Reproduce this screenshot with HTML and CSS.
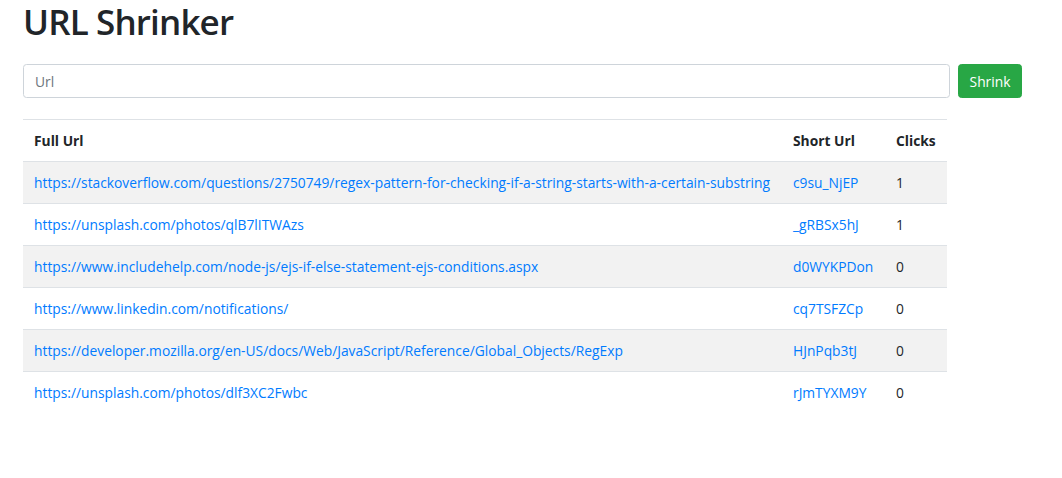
FILE: index.html
```html
<!DOCTYPE html>
<html lang="en">
<head>
<meta charset="utf-8">
<title>URL Shrinker</title>
<link rel="stylesheet" href="styles.css">
</head>
<body>
<div class="page">
  <h1 class="title">URL Shrinker</h1>
  <form class="shrink-form">
    <input class="url-input" type="url" placeholder="Url">
    <button class="btn-shrink" type="button">Shrink</button>
  </form>
  <table class="url-table">
    <thead>
      <tr><th class="col-full">Full Url</th><th class="col-short">Short Url</th><th class="col-clicks">Clicks</th></tr>
    </thead>
    <tbody>
      <tr><td><a href="#">https://stackoverflow.com/questions/2750749/regex-pattern-for-checking-if-a-string-starts-with-a-certain-substring</a></td><td><a href="#">c9su_NjEP</a></td><td>1</td></tr>
      <tr><td><a href="#">https://unsplash.com/photos/qlB7lITWAzs</a></td><td><a href="#">_gRBSx5hJ</a></td><td>1</td></tr>
      <tr><td><a href="#">https://www.includehelp.com/node-js/ejs-if-else-statement-ejs-conditions.aspx</a></td><td><a href="#">d0WYKPDon</a></td><td>0</td></tr>
      <tr><td><a href="#">https://www.linkedin.com/notifications/</a></td><td><a href="#">cq7TSFZCp</a></td><td>0</td></tr>
      <tr><td><a href="#">https://developer.mozilla.org/en-US/docs/Web/JavaScript/Reference/Global_Objects/RegExp</a></td><td><a href="#">HJnPqb3tJ</a></td><td>0</td></tr>
      <tr><td><a href="#">https://unsplash.com/photos/dlf3XC2Fwbc</a></td><td><a href="#">rJmTYXM9Y</a></td><td>0</td></tr>
    </tbody>
  </table>
</div>
</body>
</html>
```
FILE: styles.css
```css
* { box-sizing: border-box; }
html, body { margin: 0; padding: 0; background: #fff; }
body {
  font-family: "Open Sans", "Noto Sans", "Liberation Sans", sans-serif;
  font-size: 14px;
  color: #212529;
}
.page { padding: 0 23px; }
.title {
  margin: 0;
  height: 49px;
  font-size: 35px;
  font-weight: 600;
  letter-spacing: -0.85px;
  line-height: 44px;
  color: #212529;
}
.shrink-form {
  display: flex;
  gap: 8px;
  margin-top: 15px;
  width: 999px;
}
.url-input {
  flex: 1;
  height: 34px;
  border: 1px solid #ced4da;
  border-radius: 3.5px;
  padding: 0 11px;
  font: inherit;
  font-size: 13.8px;
  color: #495057;
}
.url-input::placeholder { color: #6c757d; }
.btn-shrink {
  width: 64px;
  height: 34px;
  border: 1px solid #28a745;
  border-radius: 3.5px;
  background: #28a745;
  color: #fff;
  font: inherit;
  font-size: 13.8px;
  padding: 0;
}
.url-table {
  margin-top: 21px;
  width: 924px;
  border-collapse: collapse;
  table-layout: fixed;
  font-size: 13.8px;
}
.col-full { width: 759px; }
.col-short { width: 103px; }
.col-clicks { width: 62px; }
.url-table th, .url-table td {
  text-align: left;
  padding: 0 11px;
  height: 42px;
  vertical-align: middle;
  white-space: nowrap;
  border-top: 1px solid #dee2e6;
}
.url-table th { font-weight: 700; border-bottom: 1px solid #dee2e6; }
.url-table tbody tr:first-child td { border-top: none; }
.url-table tbody tr:nth-child(odd) { background: #f2f2f2; }
.url-table a { color: #007bff; text-decoration: none; }
```
